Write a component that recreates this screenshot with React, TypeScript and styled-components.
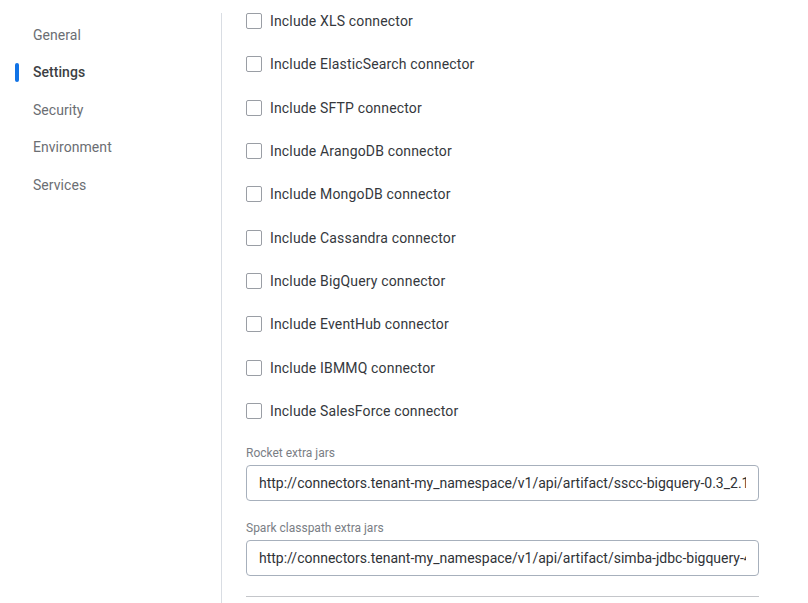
import React from 'react'
import { styled, createGlobalStyle } from 'styled-components'

const GlobalStyle = createGlobalStyle`
  html, body {
    margin: 0;
    padding: 0;
    background: #ffffff;
    font-family: Roboto, "Liberation Sans", sans-serif;
  }
`

const navItems = ['General', 'Settings', 'Security', 'Environment', 'Services']
const connectors = [
  'XLS',
  'ElasticSearch',
  'SFTP',
  'ArangoDB',
  'MongoDB',
  'Cassandra',
  'BigQuery',
  'EventHub',
  'IBMMQ',
  'SalesForce',
]

const App = () => {
  return (
    <Page>
      <GlobalStyle />
      <Sidebar>
        <Nav>
          {navItems.map((item) => (
            <NavItem key={item} active={item === 'Settings'}>
              {item}
            </NavItem>
          ))}
        </Nav>
      </Sidebar>
      <Content>
        <Scroller>
          {connectors.map((c) => (
            <Row key={c}>
              <Box />
              <Label>Include {c} connector</Label>
            </Row>
          ))}
          <Field first>
            <FieldLabel>Rocket extra jars</FieldLabel>
            <Input readOnly value="http://connectors.tenant-my_namespace/v1/api/artifact/sscc-bigquery-0.3_2.12-0.3.0.jar" />
          </Field>
          <Field>
            <FieldLabel>Spark classpath extra jars</FieldLabel>
            <Input readOnly value="http://connectors.tenant-my_namespace/v1/api/artifact/simba-jdbc-bigquery-4.2.jar" />
          </Field>
          <Divider />
        </Scroller>
      </Content>
    </Page>
  )
}

export default App

const Page = styled.div`
  display: flex;
  width: 808px;
  height: 603px;
  overflow: hidden;
`
const Sidebar = styled.div`
  width: 221px;
  flex-shrink: 0;
  margin-top: 13px;
  border-right: 1px solid #d9dde3;
`
const Nav = styled.div`
  display: flex;
  flex-direction: column;
  padding-top: 3.5px;
`
const NavItem = styled.div<{ active?: boolean }>`
  position: relative;
  height: 37.5px;
  line-height: 37.5px;
  padding-left: 33px;
  font-size: 14px;
  letter-spacing: 0.05px;
  font-weight: ${({ active }) => (active ? 500 : 400)};
  color: ${({ active }) => (active ? '#3c3f44' : '#6b6e73')};
  &::before {
    content: '';
    display: ${({ active }) => (active ? 'block' : 'none')};
    position: absolute;
    left: 15px;
    top: 9px;
    width: 4px;
    height: 19px;
    border-radius: 2px;
    background: #1173e6;
  }
`
const Content = styled.div`
  flex: 1;
  margin-top: 13px;
  overflow: hidden;
  padding-left: 24px;
  padding-right: 49px;
`
const Scroller = styled.div`
  margin-top: -13.67px;
  display: flex;
  flex-direction: column;
`
const Row = styled.div`
  height: 43.33px;
  display: flex;
  align-items: center;
  gap: 8px;
`
const Box = styled.span`
  width: 14px;
  height: 14px;
  border: 1px solid #9a9ea5;
  border-radius: 2px;
  background: #fff;
  flex-shrink: 0;
`
const Label = styled.span`
  font-size: 14px;
  letter-spacing: 0.16px;
  color: #35383d;
`
const Field = styled.div<{ first?: boolean }>`
  display: flex;
  flex-direction: column;
  padding-top: ${({ first }) => (first ? '12.33px' : '19px')};
  gap: 4px;
`
const FieldLabel = styled.div`
  font-size: 12px;
  color: #7a7e85;
  line-height: 16px;
`
const Input = styled.input`
  box-sizing: border-box;
  height: 36px;
  width: 100%;
  padding: 0 12px;
  border: 1px solid #a7b0bc;
  border-radius: 4px;
  font-family: Roboto, "Liberation Sans", sans-serif;
  font-size: 14px;
  color: #2f3237;
  outline: none;
`
const Divider = styled.div`
  margin-top: 20px;
  height: 1px;
  background: #c4c6ca;
`
